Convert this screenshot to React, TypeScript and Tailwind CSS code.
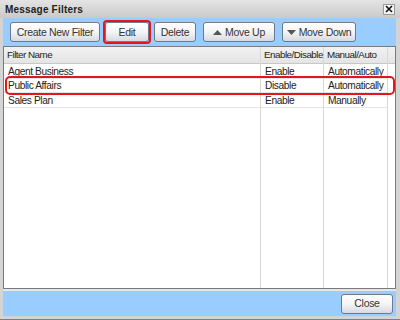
import { ReactNode } from "react";

const font = "font-['Liberation_Sans',Arial,sans-serif]";

const Btn = ({ children, w }: { children: ReactNode; w: string }) => (
  <button
    className={`${w} h-[20px] shrink-0 flex items-center justify-center gap-[3px] rounded-[3px] border border-[#6d7a8c] bg-gradient-to-b from-white via-[#f4f4f6] to-[#d8dae0] text-[10.5px] tracking-[-0.3px] text-[#333] leading-none`}
  >
    {children}
  </button>
);

const rows = [
  { name: "Agent Business", state: "Enable", mode: "Automatically" },
  { name: "Public Affairs", state: "Disable", mode: "Automatically" },
  { name: "Sales Plan", state: "Enable", mode: "Manually" },
];

const Column = ({ title, w, cells }: { title: string; w: string; cells: string[] }) => (
  <div className={`${w} shrink-0 flex flex-col border-r border-[#d8d8d8]`}>
    <div className="h-[17px] flex items-center px-[3px] bg-gradient-to-b from-[#f2f2f2] to-[#e4e4e4] border-b border-[#c8c8c8] text-[#222] text-[9.8px] tracking-[-0.5px] whitespace-nowrap">
      {title}
    </div>
    {cells.map((c, i) => (
      <div key={i} className="h-[14.5px] flex items-center pt-[1px] px-[4px] border-b border-[#e4e4ea] text-[#222] whitespace-nowrap">
        {c}
      </div>
    ))}
  </div>
);

export default function App() {
  return (
    <div className={`w-[400px] h-[320px] flex flex-col bg-[#d4d4d4] border-b border-[#808080] ${font} text-[10.2px] tracking-[-0.4px]`}>
      <div className="h-[18px] flex items-center justify-between pl-[5px] pr-[5px] bg-gradient-to-b from-[#e4e4e4] to-[#c9c9c9]">
        <span className="font-bold text-[10px] tracking-[0.2px] text-[#222]">Message Filters</span>
        <button className="w-[12px] h-[11px] flex items-center justify-center border border-[#9a9a9a] bg-[#f4f4f4]">
          <svg width="8" height="8" viewBox="0 0 8 8">
            <path d="M1 1L7 7M7 1L1 7" stroke="#111" strokeWidth="1.6" />
          </svg>
        </button>
      </div>
      <div className="flex-1 ml-[3px] mr-[4px] mb-[3px] flex flex-col">
        <div className="h-[28px] bg-[#99ccff] flex items-center pl-[7px]">
          <Btn w="w-[90px]">Create New Filter</Btn>
          <div className="ml-[3px] rounded-[4px] border-2 border-[#e8141c]">
            <Btn w="w-[44px]">Edit</Btn>
          </div>
          <div className="ml-[3px]">
            <Btn w="w-[42px]">Delete</Btn>
          </div>
          <div className="ml-[7px]">
            <Btn w="w-[72px]">
              <svg width="9" height="5" viewBox="0 0 9 5">
                <path d="M0 5L4.5 0L9 5Z" fill="#555" />
              </svg>
              Move Up
            </Btn>
          </div>
          <div className="ml-[7px]">
            <Btn w="w-[74px]">
              <svg width="9" height="5" viewBox="0 0 9 5">
                <path d="M0 0L9 0L4.5 5Z" fill="#555" />
              </svg>
              Move Down
            </Btn>
          </div>
        </div>
        <div className="relative flex-1 flex bg-white border border-[#7a7a7a] overflow-hidden">
          <Column title="Filter Name" w="w-[257px]" cells={rows.map((r) => r.name)} />
          <Column title="Enable/Disable" w="w-[63px]" cells={rows.map((r) => r.state)} />
          <Column title="Manual/Auto" w="w-[64px]" cells={rows.map((r) => r.mode)} />
          <div className="flex-1 flex flex-col">
            <div className="h-[17px] bg-gradient-to-b from-[#f2f2f2] to-[#e4e4e4] border-b border-[#c8c8c8]" />
          </div>
          <div className="absolute left-[1px] top-[29px] w-[390px] h-[19px] rounded-[5px] border-2 border-[#e8141c]" />
        </div>
        <div className="h-[2px] bg-[#e6e6e6]" />
        <div className="h-[25px] bg-[#99ccff] flex items-center justify-end pr-[3px]">
          <Btn w="w-[52px]">Close</Btn>
        </div>
      </div>
    </div>
  );
}
